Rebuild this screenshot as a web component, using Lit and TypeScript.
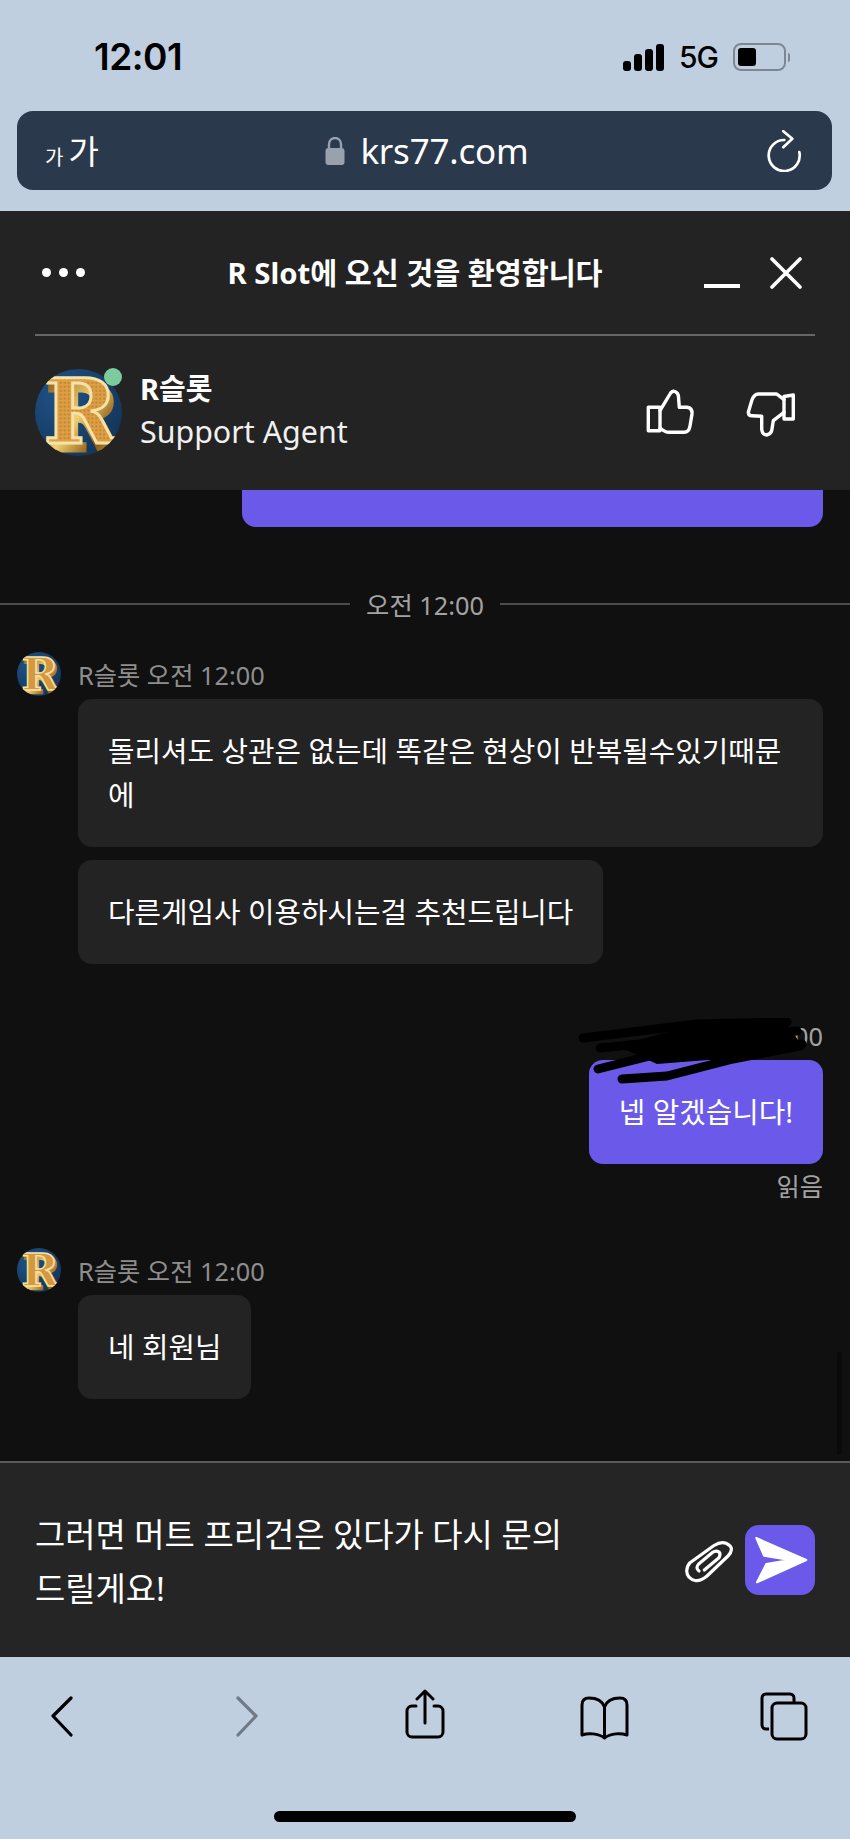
import { LitElement, html, css, svg } from 'lit';
import { customElement, property } from 'lit/decorators.js';

@customElement('r-avatar')
export class RAvatar extends LitElement {
  static styles = css`
    :host { display: block; }
    svg { display: block; width: 100%; height: 100%; }
  `;

  @property({ type: String }) uid = 'a';

  render() {
    const id = this.uid;
    return html`<svg viewBox="0 0 88 88">
      <defs>
        <pattern id="${id}-p" width="4" height="4" patternUnits="userSpaceOnUse">
          <rect width="4" height="4" fill="#dd9f45" />
          <circle cx="2" cy="2" r="1.100" fill="#bd8029" />
        </pattern>
        <linearGradient id="${id}-s" x1="0" y1="0" x2="1" y2="1">
          <stop offset="0" stop-color="#7a4c10" />
          <stop offset="0.45" stop-color="#f0cf70" />
          <stop offset="0.7" stop-color="#8a5a16" />
          <stop offset="1" stop-color="#e6bb58" />
        </linearGradient>
        <radialGradient id="${id}-b" cx="0.3" cy="0.3" r="0.9">
          <stop offset="0" stop-color="#1f5288" />
          <stop offset="1" stop-color="#123253" />
        </radialGradient>
        <clipPath id="${id}-c"><circle cx="44" cy="44" r="44" /></clipPath>
      </defs>
      <g clip-path="url(#${id}-c)">
        <rect width="88" height="88" fill="url(#${id}-b)" />
        <g font-family="'DejaVu Serif', serif" font-weight="700" font-size="90" text-anchor="middle">
          <text x="49" y="82" fill="url(#${id}-s)" stroke="url(#${id}-s)" stroke-width="5">R</text>
          <text x="46" y="75" fill="url(#${id}-p)" stroke="#f6e2a8" stroke-width="3">R</text>
        </g>
      </g>
    </svg>`;
  }
}

const ICONS = {
  lock: svg`<path d="M4 11V7a6 6 0 0 1 12 0v4" fill="none" stroke="#9aa1ae" stroke-width="2.400"/><rect x="0.500" y="11" width="19" height="17" rx="3" fill="#9aa1ae"/>`,
  reload: svg`<path d="M18.300 10A15.500 15.500 0 1 0 33.300 22" fill="none" stroke="#fff" stroke-width="2.700" stroke-linecap="round"/><path d="M17.300 1.200 26.300 8.800 17.300 17.200" fill="none" stroke="#fff" stroke-width="2.700" stroke-linecap="round" stroke-linejoin="round"/>`,
  up: svg`<path d="M3.300 20.300H15V43.700H3.300Z" fill="none" stroke="#fff" stroke-width="3.400" stroke-linejoin="round"/><path d="M15 23.700 25 7Q27 3.500 30 4.500 33.500 6 33.500 10L34.300 20.300H42Q47.500 21 47 27L45 39Q44 45.300 39 45.300H24Q20 45.300 15 41" fill="none" stroke="#fff" stroke-width="3.400" stroke-linejoin="round" stroke-linecap="round"/>`,
  down: svg`<path d="M39 9.500 48.300 8V32H39Z" fill="none" stroke="#fff" stroke-width="3.400" stroke-linejoin="round"/><path d="M39 12.700 31.700 7H13.300Q9 7 6.700 13.700L3.300 25.300Q3.500 28.700 6.700 28.700L16.700 29.300V42Q17 47.500 21.700 48 26 47 26.700 43.700L28.300 33.700 39 25.300" fill="none" stroke="#fff" stroke-width="3.400" stroke-linejoin="round" stroke-linecap="round"/>`,
  clip: svg`<path d="M47 21 26 41Q20 46 15 45.700 6 44 5.700 36 6 31 9 27.700L33 10.500Q40 6 45 8.300 51 11 50.300 15 50 18 47 21Z" fill="none" stroke="#fff" stroke-width="3.200" stroke-linejoin="round"/><path d="M23.300 35 38 22.700Q40 19 38 17 35 15 31.700 17.300L17.700 29Q14 33 18 36" fill="none" stroke="#fff" stroke-width="3.200" stroke-linecap="round" stroke-linejoin="round"/>`,
  back: svg`<path d="M21 2 3 20l18 19" fill="none" stroke="currentColor" stroke-width="3.200" stroke-linecap="round" stroke-linejoin="round"/>`,
  forward: svg`<path d="M2 2l18 18L2 39" fill="none" stroke="currentColor" stroke-width="3.200" stroke-linecap="round" stroke-linejoin="round"/>`,
  share: svg`<path d="M11 17H7a5 5 0 0 0-5 5v21a5 5 0 0 0 5 5h26a5 5 0 0 0 5-5V22a5 5 0 0 0-5-5h-4M20 34V2M12 10l8-8 8 8" fill="none" stroke="#000" stroke-width="3" stroke-linecap="round" stroke-linejoin="round"/>`,
  book: svg`<path d="M25.500 11C23 4 17 2 10 2 6 2 3 4 3 9v30c6-2 16-2 22.500 3 6.500-5 16.500-5 22.500-3V9c0-5-3-7-7-7-7 0-13 2-15.500 9Zm0 0v31" fill="none" stroke="#000" stroke-width="3" stroke-linejoin="round"/>`,
  tabs: svg`<path d="M9 37H6a4 4 0 0 1-4-4V6a4 4 0 0 1 4-4h24a4 4 0 0 1 4 4v4" fill="none" stroke="#000" stroke-width="3"/><rect x="12" y="11" width="34" height="36" rx="5" fill="none" stroke="#000" stroke-width="3"/>`,
};

@customElement('app-root')
export class AppRoot extends LitElement {
  static styles = css`
    :host {
      display: block;
      width: 850px;
      height: 1839px;
      overflow: hidden;
      background: #c0cfe0;
      font-family: 'Noto Sans', 'Noto Sans CJK KR', sans-serif;
    }

    svg { display: block; }

    .status {
      height: 111px;
      box-sizing: border-box;
      padding: 38px 60px 0 94px;
      display: flex;
      justify-content: space-between;
      color: #000;
    }
    .clock {
      font: 600 37px/38px 'Inter', sans-serif;
      letter-spacing: -0.5px;
    }
    .sys { display: flex; align-items: center; height: 38px; gap: 15px; }
    .bars { display: flex; align-items: flex-end; gap: 3px; height: 27px; }
    .bars i { display: block; width: 8px; background: #000; border-radius: 3px; }
    .net { font: 500 30px/38px 'Inter', sans-serif; letter-spacing: -1px; }
    .batt { display: flex; align-items: center; gap: 2px; }
    .batt-body {
      width: 53px;
      height: 28px;
      box-sizing: border-box;
      border: 2px solid #7d8794;
      border-radius: 8px;
      padding: 3px;
    }
    .batt-body i { display: block; width: 18px; height: 100%; background: #000; border-radius: 3px; }
    .batt-cap { width: 2px; height: 9px; background: #7d8794; border-radius: 0 2px 2px 0; }

    .url {
      height: 79px;
      margin: 0 18px 0 17px;
      background: #2b394c;
      border-radius: 16px;
      display: grid;
      grid-template-columns: 1fr auto 1fr;
      align-items: center;
      padding: 0 30px 0 28px;
      color: #fff;
    }
    .aa { display: flex; align-items: flex-end; font-family: 'Noto Sans CJK KR', sans-serif; line-height: 1; gap: 5px; }
    .aa span:first-child { font-size: 20px; }
    .aa span:last-child { font-size: 33px; }
    .host { display: flex; align-items: center; gap: 15px; margin-left: 7px; }
    .host b { font: 400 35px/40px 'Noto Sans', sans-serif; letter-spacing: -0.2px; }
    .url .reload { justify-self: end; }

    .chat { margin-top: 21px; }

    .head { background: #232323; height: 279px; padding: 0 35px; display: flex; flex-direction: column; }
    .top {
      height: 123px;
      border-bottom: 2px solid #666;
      display: grid;
      grid-template-columns: 116px 1fr 136px;
      align-items: center;
      color: #fff;
    }
    .dots { display: flex; gap: 8px; padding-left: 7px; }
    .dots i { width: 9px; height: 9px; background: #fff; border-radius: 50%; }
    .title { text-align: center; font-size: 29.300px; font-weight: 700; line-height: 40px; white-space: nowrap; }
    .ctrls { display: flex; justify-content: flex-end; align-items: center; gap: 30px; padding-right: 13px; }
    .min { width: 36px; height: 4px; background: #fff; margin-top: 26px; }

    .agent { flex: 1; display: flex; align-items: center; gap: 18px; padding-bottom: 2px; }
    .big-av { position: relative; width: 87px; height: 87px; }
    .big-av r-avatar { width: 87px; height: 87px; }
    .online {
      position: absolute;
      top: -1px;
      right: 0;
      width: 18px;
      height: 18px;
      border-radius: 50%;
      background: #7ccb9d;
    }
    .who { flex: 1; color: #fff; }
    .who b { display: block; font-size: 29px; font-weight: 700; line-height: 40px; }
    .who span { display: block; font-size: 30.400px; line-height: 46px; color: #f0f0f0; }
    .votes { display: flex; gap: 50px; padding-right: 20px; }

    .body {
      position: relative;
      height: 971px;
      box-sizing: border-box;
      overflow: hidden;
      background: #101010;
      padding: 0 27px 0 17px;
      display: flex;
      flex-direction: column;
    }
    .stub {
      align-self: flex-end;
      width: 581px;
      height: 37px;
      background: #6b5aea;
      border-radius: 0 0 14px 14px;
      flex: none;
    }
    .sep {
      margin: 57px -27px 0 -17px;
      height: 40px;
      display: flex;
      align-items: center;
      gap: 16px;
      color: #a3a3a3;
      font-size: 25.300px;
      flex: none;
    }
    .sep::before, .sep::after { content: ''; flex: 1; height: 2px; background: #4c4c4c; }
    .bar {
      position: absolute;
      right: 8px;
      top: 862px;
      width: 5px;
      height: 103px;
      border-radius: 3px;
      background: #0a0a0a;
    }

    .meta { display: flex; align-items: center; height: 44px; gap: 17px; color: #8e8e8e; font-size: 25.300px; }
    .meta r-avatar { width: 44px; height: 44px; flex: none; }
    .group { margin-top: 28px; display: flex; flex-direction: column; }
    .stack { margin: 3px 0 0 61px; display: flex; flex-direction: column; gap: 13px; align-items: flex-start; }

    .bubble {
      box-sizing: border-box;
      background: #232323;
      color: #fff;
      font-size: 28.800px;
      line-height: 44px;
      padding: 30px;
      border-radius: 14px;
    }
    .mine {
      position: relative;
      margin-top: 54px;
      display: flex;
      flex-direction: column;
      align-items: flex-end;
      height: 186px;
      flex: none;
    }
    .mine .time { color: #a3a3a3; font-size: 25.300px; line-height: 36px; }
    .mine .bubble { background: #6b5aea; margin-top: 6px; }
    .mine .read { color: #a3a3a3; font-size: 25.300px; line-height: 36px; margin-top: 4px; }
    .scribble { position: absolute; left: 0; top: 0; pointer-events: none; }
    .last { margin-top: 44px; }

    .input {
      height: 196px;
      box-sizing: border-box;
      background: #252525;
      border-top: 2px solid #5a5a5a;
      padding: 0 35px;
      display: flex;
      align-items: center;
    }
    .draft { flex: 1; color: #fff; font-size: 32.900px; line-height: 54px; max-width: 545px; padding-top: 4px; }
    .clip { margin-left: auto; margin-right: 9px; }
    .send {
      width: 70px;
      height: 70px;
      background: #6b5aea;
      border-radius: 14px;
      flex: none;
    }

    .tools {
      height: 182px;
      box-sizing: border-box;
      padding: 32px 0 0 50px;
      position: relative;
      display: flex;
      align-items: flex-start;
    }
    .tools svg { flex: none; }
    .back { color: #000; margin-top: 7px; }
    .fwd { color: #6f7a86; margin: 7px 0 0 162px; }
    .share { margin-left: 145px; }
    .book { margin: 7px 0 0 134px; }
    .tabs { margin: 3px 0 0 130px; }
    .homebar {
      position: absolute;
      left: 274px;
      top: 154px;
      width: 302px;
      height: 11px;
      border-radius: 6px;
      background: #000;
    }
  `;

  private scribble() {
    return html`<svg class="scribble" width="806" height="186" viewBox="0 0 806 186">
      <path d="M600 28 680 6 770 6 785 28 716 40 640 46Z" fill="#000" />
      <g fill="none" stroke="#000" stroke-linecap="round" stroke-linejoin="round" stroke-width="9">
        <path d="M566 20 680 6 770 4" />
        <path d="M583 30 683 20 780 13" />
        <path d="M581 51 633 38 716 33 785 26" />
        <path d="M605 61 650 58 716 41 783 28" />
      </g>
    </svg>`;
  }

  render() {
    return html`
      <div class="status">
        <div class="clock">12:01</div>
        <div class="sys">
          <div class="bars">
            <i style="height:10px"></i><i style="height:17px"></i><i style="height:22px"></i><i style="height:27px"></i>
          </div>
          <div class="net">5G</div>
          <div class="batt"><div class="batt-body"><i></i></div><div class="batt-cap"></div></div>
        </div>
      </div>

      <div class="url">
        <div class="aa"><span>가</span><span>가</span></div>
        <div class="host">
          <svg width="20" height="28" viewBox="0 0 20 28">${ICONS.lock}</svg>
          <b>krs77.com</b>
        </div>
        <svg class="reload" width="36" height="42" viewBox="0 0 36 42">${ICONS.reload}</svg>
      </div>

      <div class="chat">
        <div class="head">
          <div class="top">
            <div class="dots"><i></i><i></i><i></i></div>
            <div class="title">R Slot에 오신 것을 환영합니다</div>
            <div class="ctrls">
              <div class="min"></div>
              <svg width="32" height="32" viewBox="0 0 32 32"><path d="M2 2l28 28M30 2 2 30" stroke="#fff" stroke-width="3.600" stroke-linecap="round"/></svg>
            </div>
          </div>
          <div class="agent">
            <div class="big-av"><r-avatar uid="big"></r-avatar><div class="online"></div></div>
            <div class="who"><b>R슬롯</b><span>Support Agent</span></div>
            <div class="votes">
              <svg width="50" height="50" viewBox="0 0 50 50">${ICONS.up}</svg>
              <svg width="50" height="50" viewBox="0 0 50 50">${ICONS.down}</svg>
            </div>
          </div>
        </div>

        <div class="body">
          <div class="stub"></div>
          <div class="sep">오전 12:00</div>

          <div class="group">
            <div class="meta"><r-avatar uid="m1"></r-avatar>R슬롯 오전 12:00</div>
            <div class="stack">
              <div class="bubble">돌리셔도 상관은 없는데 똑같은 현상이 반복될수있기때문에</div>
              <div class="bubble">다른게임사 이용하시는걸 추천드립니다</div>
            </div>
          </div>

          <div class="mine">
            <div class="time">오전 12:00</div>
            <div class="bubble">넵 알겠습니다!</div>
            <div class="read">읽음</div>
            ${this.scribble()}
          </div>

          <div class="group last">
            <div class="meta"><r-avatar uid="m2"></r-avatar>R슬롯 오전 12:00</div>
            <div class="stack"><div class="bubble">네 회원님</div></div>
          </div>

          <div class="bar"></div>
        </div>

        <div class="input">
          <div class="draft">그러면 머트 프리건은 있다가 다시 문의 드릴게요!</div>
          <svg class="clip" width="55" height="50" viewBox="0 0 55 50">${ICONS.clip}</svg>
          <div class="send">
            <svg width="70" height="70" viewBox="0 0 70 70"><path d="M11.300 13 61.300 35 12 57.300 21.300 39 44.700 35 19 30.700Z" fill="#fff" stroke="#fff" stroke-width="2" stroke-linejoin="round"/></svg>
          </div>
        </div>
      </div>

      <div class="tools">
        <svg class="back" width="24" height="41" viewBox="0 0 24 41">${ICONS.back}</svg>
        <svg class="fwd" width="24" height="41" viewBox="0 0 24 41">${ICONS.forward}</svg>
        <svg class="share" width="40" height="52" viewBox="0 0 40 52">${ICONS.share}</svg>
        <svg class="book" width="51" height="44" viewBox="0 0 51 44">${ICONS.book}</svg>
        <svg class="tabs" width="48" height="49" viewBox="0 0 48 49">${ICONS.tabs}</svg>
        <div class="homebar"></div>
      </div>
    `;
  }
}
